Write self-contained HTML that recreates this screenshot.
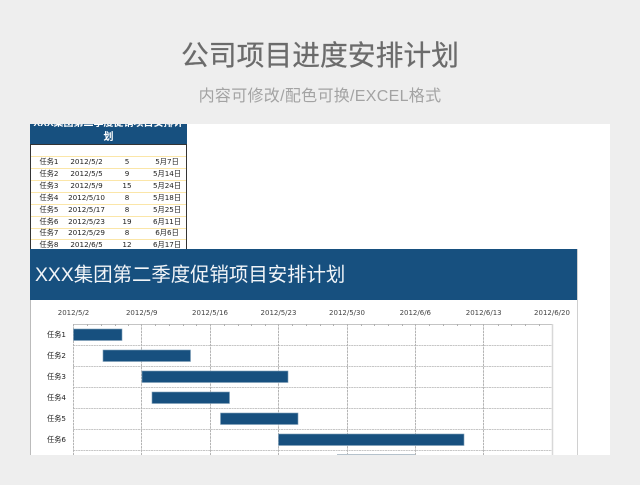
<!DOCTYPE html>
<html lang="zh">
<head>
<meta charset="utf-8">
<style>
html,body{margin:0;padding:0}
body{width:640px;height:485px;background:#eeeeee;overflow:hidden;position:relative;font-family:"Liberation Sans","Noto Sans CJK SC",sans-serif}
.a{position:absolute;white-space:nowrap}
.t{left:0;width:640px;text-align:center}
.panel{left:30px;top:124px;width:580px;height:331px;background:#fff;overflow:hidden;position:absolute}
.r{position:absolute;left:1px;width:155px;height:11px;border-bottom:1px solid #fbe6a8;font-family:"DejaVu Sans","Noto Sans CJK SC",sans-serif;font-size:7.2px;line-height:10px;color:#222}
.r span{position:absolute;top:0;text-align:center;white-space:nowrap}
.c1{left:0;width:36px}.c2{left:28px;width:55px}.c3{left:84px;width:24px}.c4{left:108px;width:56px}
.lab{position:absolute;left:0;width:36px;text-align:right;font-family:"DejaVu Sans","Noto Sans CJK SC",sans-serif;font-size:7.2px;color:#222;line-height:12px}
.dt{position:absolute;width:60px;text-align:center;font-family:"DejaVu Sans","Noto Sans CJK SC",sans-serif;font-size:7px;color:#444;line-height:12px;top:183px}
</style>
</head>
<body>
<div class="a t" style="top:37px;font-size:27.8px;line-height:38px;color:#6b6b6b;-webkit-text-stroke:.25px #6b6b6b">公司项目进度安排计划</div>
<div class="a t" style="top:85px;font-size:16px;line-height:24px;color:#a3a3a3;letter-spacing:.3px">内容可修改/配色可换/EXCEL格式</div>

<div class="panel">
  <!-- small table -->
  <div class="a" style="left:0;top:0;width:157px;height:20px;background:#17507f;overflow:hidden;color:#fff;font-size:10px;line-height:14px;text-align:center;font-weight:bold">
    <div style="margin-top:-7px;white-space:nowrap">XXX集团第二季度促销项目安排计</div>
    <div style="margin-top:0">划</div>
  </div>
  <div class="a" style="left:0;top:20px;width:155px;height:105px;border:1px solid #333;border-bottom:0"></div>
  <div class="r" style="top:21px"></div>
  <div class="r" style="top:33px"><span class="c1">任务1</span><span class="c2">2012/5/2</span><span class="c3">5</span><span class="c4">5月7日</span></div>
  <div class="r" style="top:45px"><span class="c1">任务2</span><span class="c2">2012/5/5</span><span class="c3">9</span><span class="c4">5月14日</span></div>
  <div class="r" style="top:57px"><span class="c1">任务3</span><span class="c2">2012/5/9</span><span class="c3">15</span><span class="c4">5月24日</span></div>
  <div class="r" style="top:69px"><span class="c1">任务4</span><span class="c2">2012/5/10</span><span class="c3">8</span><span class="c4">5月18日</span></div>
  <div class="r" style="top:81px"><span class="c1">任务5</span><span class="c2">2012/5/17</span><span class="c3">8</span><span class="c4">5月25日</span></div>
  <div class="r" style="top:93px"><span class="c1">任务6</span><span class="c2">2012/5/23</span><span class="c3">19</span><span class="c4">6月11日</span></div>
  <div class="r" style="top:104px"><span class="c1">任务7</span><span class="c2">2012/5/29</span><span class="c3">8</span><span class="c4">6月6日</span></div>
  <div class="r" style="top:116px;border-bottom:0"><span class="c1">任务8</span><span class="c2">2012/6/5</span><span class="c3">12</span><span class="c4">6月17日</span></div>

  <!-- chart -->
  <div class="a" style="left:0;top:125px;width:546px;height:206px;border-left:1px solid #bbb;border-right:1px solid #d0d0d0;background:#fff"></div>
  <div class="a" style="left:0;top:125px;width:547px;height:51px;background:#17507f;color:#f2f5f8;font-size:19.4px;line-height:53px;text-indent:5px">XXX集团第二季度促销项目安排计划</div>

  <svg class="a" style="left:0;top:0" width="580" height="331" viewBox="30 124 580 331">
    <g fill="none" stroke-width="1">
      <path d="M73 324.5H552" stroke="#c4c4c4"/>
      <path d="M73 345.5H552M73 366.5H552M73 387.5H552M73 408.5H552M73 429.5H552M73 450.5H552" stroke="#c6c6c6" stroke-dasharray="2 .6"/>
      <path d="M73.5 324V455M141.5 324V455M210.5 324V455M278.5 324V455M347.5 324V455M415.5 324V455M483.5 324V455" stroke-dasharray="2.5 .8" stroke="#b4b4b4"/>
      <path d="M552.5 324V455" stroke="#d8d8d8" stroke-width="1.5"/>
      <path d="M87.5 324v2M101.5 324v2M115.5 324v2M128.5 324v2M155.5 324v2M169.5 324v2M183.5 324v2M196.5 324v2M224.5 324v2M238.5 324v2M251.5 324v2M265.5 324v2M292.5 324v2M306.5 324v2M320.5 324v2M333.5 324v2M361.5 324v2M374.5 324v2M388.5 324v2M402.5 324v2M429.5 324v2M443.5 324v2M457.5 324v2M470.5 324v2M498.5 324v2M511.5 324v2M525.5 324v2M539.5 324v2" stroke="#b0b0b0"/>
      <path d="M337 454.5H415" stroke="#b5c2cc"/>
    </g>
    <g fill="#17507f" stroke="#7f9fb8" stroke-width="0.6">
      <rect x="73.5" y="329" width="48.5" height="11.5"/>
      <rect x="103" y="350" width="87.5" height="11.5"/>
      <rect x="142" y="371" width="146" height="11.5"/>
      <rect x="152" y="392" width="77.5" height="11.5"/>
      <rect x="220.5" y="413" width="77.5" height="11.5"/>
      <rect x="278.5" y="434" width="185.5" height="11.5"/>
    </g>
  </svg>

  <div class="dt" style="left:13.5px">2012/5/2</div>
  <div class="dt" style="left:81.7px">2012/5/9</div>
  <div class="dt" style="left:150px">2012/5/16</div>
  <div class="dt" style="left:218.5px">2012/5/23</div>
  <div class="dt" style="left:287px">2012/5/30</div>
  <div class="dt" style="left:355.3px">2012/6/6</div>
  <div class="dt" style="left:423.7px">2012/6/13</div>
  <div class="dt" style="left:492px">2012/6/20</div>

  <div class="lab" style="top:205px">任务1</div>
  <div class="lab" style="top:226px">任务2</div>
  <div class="lab" style="top:247px">任务3</div>
  <div class="lab" style="top:268px">任务4</div>
  <div class="lab" style="top:289px">任务5</div>
  <div class="lab" style="top:310px">任务6</div>
</div>
</body>
</html>
